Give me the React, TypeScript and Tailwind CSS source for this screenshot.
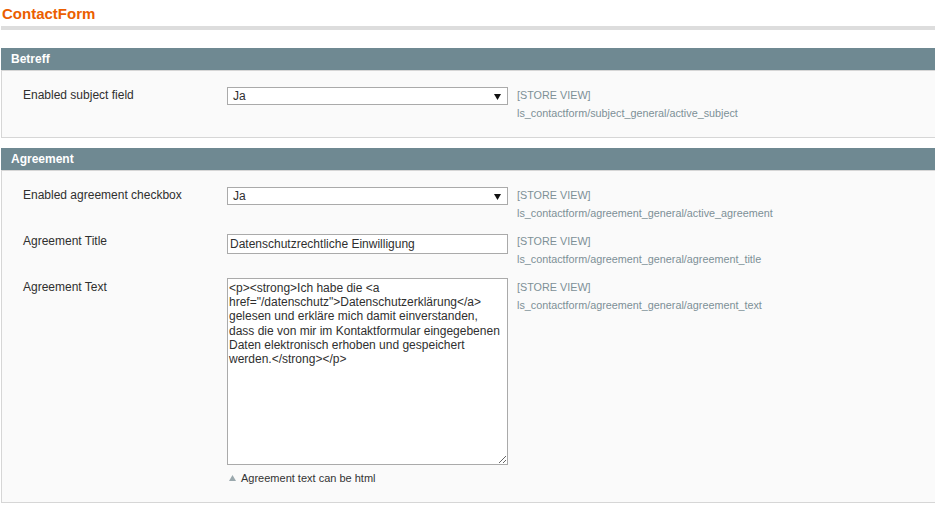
const font = { fontFamily: '"Liberation Sans", Arial, sans-serif' };

const SelectBox = ({ value }: { value: string }) => (
  <div className="mt-px flex h-[18px] w-[281px] items-center justify-between border border-[#aaaaaa] bg-white pl-[5px] pr-[6px] text-[12px] text-[#2f2f2f]">
    <span>{value}</span>
    <svg width="7" height="7" viewBox="0 0 7 7">
      <path d="M0 1 L7 1 L3.5 7 Z" fill="#111" />
    </svg>
  </div>
);

const Scope = ({ path, offset = "" }: { path: string; offset?: string }) => (
  <div className={`ml-[9px] text-[10.8px] leading-[18px] text-[#7d9097] ${offset}`}>
    <div>[STORE VIEW]</div>
    <div>{path}</div>
  </div>
);

const Row = ({
  label,
  height,
  control,
  path,
  offset = ""
}: {
  label: string;
  height: string;
  control: React.ReactNode;
  path: string;
  offset?: string;
}) => (
  <div className={`flex items-start ${height}`}>
    <div className={`w-[204px] text-[12px] leading-[18px] text-[#2f2f2f] ${offset}`}>{label}</div>
    <div>{control}</div>
    <Scope path={path} offset={offset} />
  </div>
);

const Section = ({ title, children, bodyClass }: { title: string; children: React.ReactNode; bodyClass: string }) => (
  <div className="mb-[10px] w-[960px]">
    <div className="flex h-[22px] items-center bg-[#6f8992] pl-[10px] text-[12px] font-bold text-white">
      {title}
    </div>
    <div className={`border border-[#d6d6d6] bg-[#fafafa] pl-[21px] pt-[15px] ${bodyClass}`}>
      {children}
    </div>
  </div>
);

export default function App() {
  return (
    <div className="h-[518px] w-[935px] overflow-hidden bg-white pl-px" style={font}>
      <h1 className="pl-px pt-[5px] text-[15px] font-bold leading-[18px] text-[#eb5e00]">ContactForm</h1>
      <div className="mt-[3px] h-[4px] w-[960px] bg-[#dddddd]" />
      <div className="mt-[18px]">
        <Section title="Betreff" bodyClass="pb-[5px]">
          <Row
            label="Enabled subject field"
            height="h-[46px]"
            control={<SelectBox value="Ja" />}
            path="ls_contactform/subject_general/active_subject"
          />
        </Section>
        <Section title="Agreement" bodyClass="pb-[17px]">
          <Row
            label="Enabled agreement checkbox"
            height="h-[45px]"
            control={<SelectBox value="Ja" />}
            path="ls_contactform/agreement_general/active_agreement"
          />
          <Row
            label="Agreement Title"
            height="h-[46px]"
            offset="pt-px"
            control={
              <input
                readOnly
                defaultValue="Datenschutzrechtliche Einwilligung"
                className="mt-px h-[20px] w-[281px] border border-[#aaaaaa] bg-white px-[2px] text-[12px] text-[#2f2f2f] outline-none"
              />
            }
            path="ls_contactform/agreement_general/agreement_title"
          />
          <div className="flex items-start">
            <div className="w-[204px] pt-px text-[12px] leading-[18px] text-[#2f2f2f]">Agreement Text</div>
            <div>
              <textarea
                readOnly
                defaultValue={'<p><strong>Ich habe die <a href="/datenschutz">Datenschutzerklärung</a> gelesen und erkläre mich damit einverstanden, dass die von mir im Kontaktformular eingegebenen Daten elektronisch erhoben und gespeichert werden.</strong></p>'}
                className="mt-px block h-[187px] w-[281px] resize border border-[#aaaaaa] bg-white px-px pt-[2px] text-[12px] leading-[14.2px] text-[#2f2f2f] outline-none"
              />
              <div className="mt-[6px] flex items-center text-[11px] leading-[14px] text-[#333333]">
                <svg width="7" height="6" viewBox="0 0 7 6" className="ml-[2px] mr-[5px]">
                  <path d="M0 6 L3.5 0 L7 6 Z" fill="#9aa8ad" />
                </svg>
                <span>Agreement text can be html</span>
              </div>
            </div>
            <Scope path="ls_contactform/agreement_general/agreement_text" offset="pt-px" />
          </div>
        </Section>
      </div>
    </div>
  );
}
